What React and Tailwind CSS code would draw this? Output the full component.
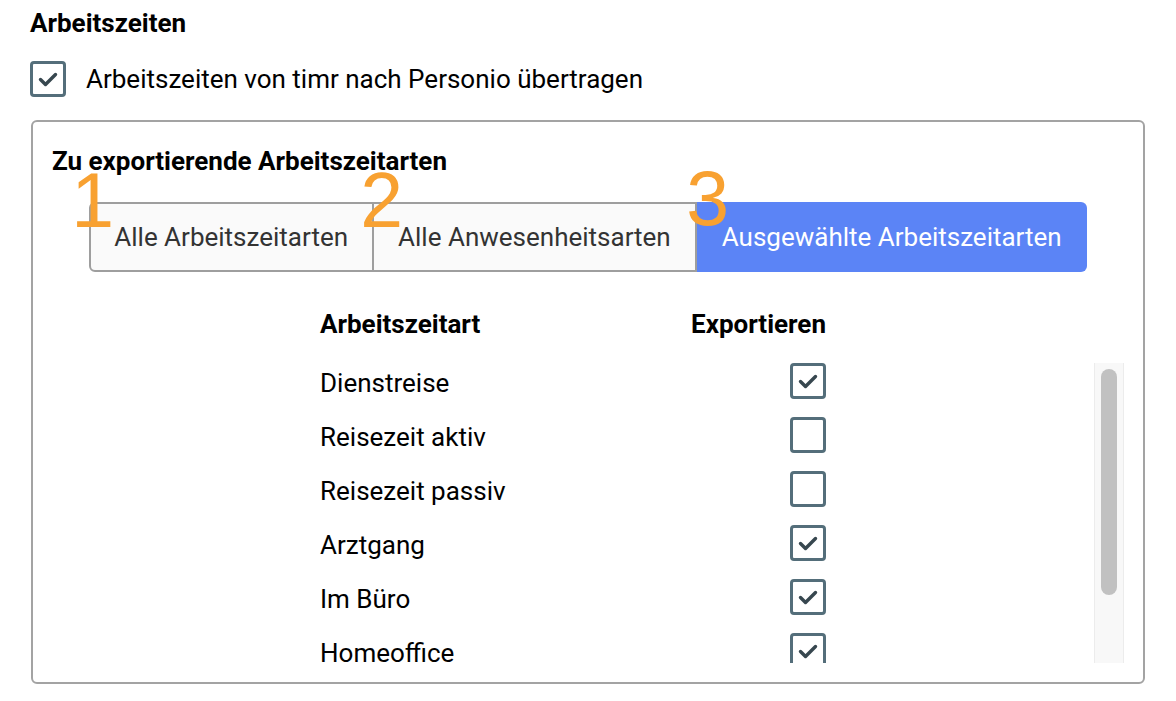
import React, { useState } from "react";

const rows = [
  { name: "Dienstreise", on: true },
  { name: "Reisezeit aktiv", on: false },
  { name: "Reisezeit passiv", on: false },
  { name: "Arztgang", on: true },
  { name: "Im Büro", on: true },
  { name: "Homeoffice", on: true },
];

const CheckBox = ({ checked, onClick }) => (
  <button
    onClick={onClick}
    className="w-[36px] h-[36px] shrink-0 border-[3px] border-[#546e7a] rounded-[4px] bg-white flex items-center justify-center p-0"
  >
    {checked && (
      <svg width="30" height="30" viewBox="0 0 30 30" fill="none">
        <path
          d="M7.5 15.5 L12.5 20.5 L22.5 10.5"
          stroke="#37474f"
          strokeWidth="3.4"
          strokeLinecap="round"
          strokeLinejoin="round"
        />
      </svg>
    )}
  </button>
);

const App = () => {
  const [transfer, setTransfer] = useState(true);
  const [mode, setMode] = useState(2);
  const [items, setItems] = useState(rows);

  const toggle = (i) =>
    setItems(items.map((r, j) => (j === i ? { ...r, on: !r.on } : r)));

  const modes = ["Alle Arbeitszeitarten", "Alle Anwesenheitsarten", "Ausgewählte Arbeitszeitarten"];

  return (
    <div className="w-[1176px] h-[701px] bg-white text-black font-['Roboto',sans-serif] pl-[30px] pr-[31px] pt-[6px]">
      <h2 className="text-[26px] leading-[34px] font-bold">Arbeitszeiten</h2>

      <div className="flex items-center gap-[20px] mt-[21px]">
        <CheckBox checked={transfer} onClick={() => setTransfer(!transfer)} />
        <span className="text-[26px] leading-[36px]">Arbeitszeiten von timr nach Personio übertragen</span>
      </div>

      <div className="mt-[23px] ml-[1px] border-2 border-[#a3a3a3] rounded-[6px] pt-[24px] pb-[19px] px-[19px]">
        <h3 className="text-[26px] leading-[30px] font-bold">Zu exportierende Arbeitszeitarten</h3>

        <div className="flex justify-center mt-[26px]">
          <div className="relative flex h-[70px]">
            {modes.map((m, i) => {
              const active = mode === i;
              let cls = "text-[26px] leading-none whitespace-nowrap ";
              if (active) cls += "bg-[#5b84f6] text-white px-[25px] ";
              else cls += "bg-[#fafafa] text-[#333333] border-y-2 border-r-2 border-[#9e9e9e] ";
              if (!active && i === 0) cls += "pl-[23px] pr-[24px] ";
              if (!active && i !== 0) cls += "px-[24px] ";
              if (i === 0) cls += "rounded-l-[6px] border-l-2 ";
              if (i === 2) cls += "rounded-r-[6px] ";
              return (
                <button key={m} onClick={() => setMode(i)} className={cls}>
                  {m}
                </button>
              );
            })}
            <span className="absolute left-[-18px] top-[-40px] text-[77px] leading-none text-[#f8a131] font-['Liberation_Sans',sans-serif] pointer-events-none">1</span>
            <span className="absolute left-[271px] top-[-40px] text-[77px] leading-none text-[#f8a131] font-['Liberation_Sans',sans-serif] pointer-events-none">2</span>
            <span className="absolute left-[597px] top-[-42px] text-[77px] leading-none text-[#f8a131] font-['Liberation_Sans',sans-serif] pointer-events-none">3</span>
          </div>
        </div>

        <div className="flex pr-[30px] mt-[37px]">
          <div className="w-[506px] mx-auto flex justify-between text-[26px] leading-[30px] font-bold">
            <span>Arbeitszeitart</span>
            <span>Exportieren</span>
          </div>
        </div>

        <div className="flex h-[300px] mt-[24px]">
          <div className="flex-1 overflow-hidden">
            <div className="w-[506px] mx-auto flex flex-col gap-[18px]">
              {items.map((r, i) => (
                <div key={r.name} className="flex items-center justify-between h-[36px]">
                  <span className="text-[26px] leading-[36px] mt-[4px]">{r.name}</span>
                  <CheckBox checked={r.on} onClick={() => toggle(i)} />
                </div>
              ))}
            </div>
          </div>
          <div className="w-[30px] bg-[#f8f8f8] border-x border-[#ececec] pt-[6px] flex justify-center">
            <div className="w-[16px] h-[226px] rounded-full bg-[#c1c1c1]" />
          </div>
        </div>
      </div>
    </div>
  );
};

export default App;
